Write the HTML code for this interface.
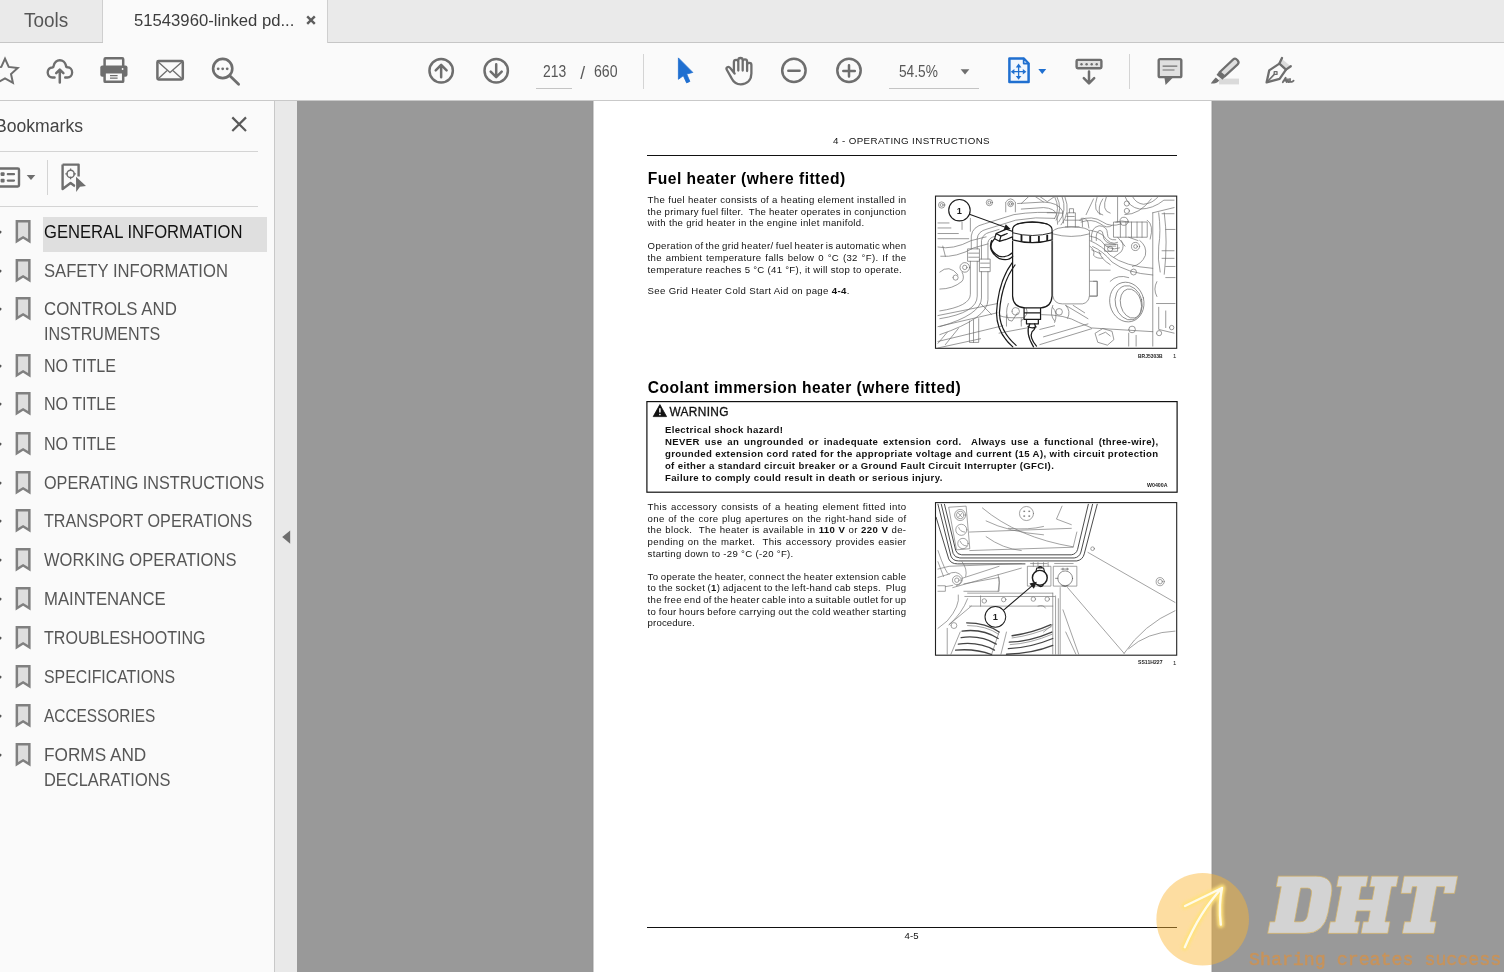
<!DOCTYPE html>
<html><head><meta charset='utf-8'><title>51543960-linked pdf</title>
<style>
html,body{margin:0;padding:0;}
body{width:1504px;height:972px;overflow:hidden;position:relative;background:#999;font-family:"Liberation Sans",sans-serif;}
.t{position:absolute;white-space:pre;transform-origin:0 0;display:block;}
.abs{position:absolute;}
#tabbar{left:0;top:0;width:1504px;height:42px;background:#eaeaea;border-bottom:1px solid #c6c6c6;}
#tabtools{left:0;top:0;width:102px;height:42px;border-right:1px solid #cfcfcf;}
#tabdoc{left:103px;top:0;width:224px;height:43px;background:#fafafa;border-right:1px solid #cfcfcf;}
#toolbar{left:0;top:43px;width:1504px;height:57px;background:#fafafa;border-bottom:1px solid #c9c9c9;}
#sidebar{left:0;top:101px;width:274px;height:871px;background:#fafafa;border-right:1px solid #c8c8c8;}
#splitter{left:275px;top:101px;width:22px;height:871px;background:#e9e9e9;}
#page{left:594px;top:101px;width:617px;height:871px;background:#fff;}
.hr{position:absolute;height:1px;background:#d4d4d4;}
.vsep{position:absolute;width:1px;background:#d4d4d4;}
svg{position:absolute;overflow:visible;}
#txt{position:absolute;left:0;top:0;width:1504px;height:972px;will-change:transform;}

</style></head>
<body>

<div class="abs" id="tabbar"></div>
<div class="abs" id="tabtools"></div>
<div class="abs" id="tabdoc"></div>
<div class="abs" id="toolbar"></div>
<div class="abs" id="sidebar"></div>
<div class="abs" id="splitter"></div>
<div class="abs" id="page"></div>
<div class="abs" style="left:592px;top:101px;width:1px;height:871px;background:#959595"></div><div class="abs" style="left:593px;top:101px;width:1px;height:871px;background:#cdcdcd"></div>
<div class="abs" style="left:1211px;top:101px;width:1px;height:871px;background:#cdcdcd"></div><div class="abs" style="left:1212px;top:101px;width:1px;height:871px;background:#959595"></div>
<!-- toolbar underlines / separators -->
<div class="hr" style="left:536px;top:88px;width:36px;background:#c4c4c4"></div>
<div class="hr" style="left:889px;top:88px;width:90px;background:#c4c4c4"></div>
<div class="vsep" style="left:643px;top:54px;height:35px"></div>
<div class="vsep" style="left:1129px;top:54px;height:35px"></div>
<!-- sidebar rules -->
<div class="hr" style="left:0;top:151px;width:258px"></div>
<div class="hr" style="left:0;top:206px;width:258px"></div>
<div class="vsep" style="left:47px;top:160px;height:35px"></div>
<div class="abs" style="left:43px;top:217px;width:224px;height:35px;background:#dfdfdf"></div>
<div id='txt'>
<span id='t0' class='t' style="left:24.30px;top:7.00px;line-height:26px;font-size:20px;color:#565656;font-family:'Liberation Sans',sans-serif;transform:scaleX(0.9485);">Tools</span>
<span id='t1' class='t' style="left:134.30px;top:10.00px;line-height:21px;font-size:16.5px;color:#3c3c3c;font-family:'Liberation Sans',sans-serif;transform:scaleX(1.0106);">51543960-linked pd...</span>
<span id='t2' class='t' style="left:543.20px;top:62.00px;line-height:20px;font-size:15.6px;color:#565656;font-family:'Liberation Sans',sans-serif;transform:scaleX(0.8912);">213</span>
<span id='t3' class='t' style="left:580.20px;top:62.00px;line-height:23px;font-size:17.5px;color:#5a5a5a;font-family:'Liberation Sans',sans-serif;">/</span>
<span id='t4' class='t' style="left:594.40px;top:62.00px;line-height:20px;font-size:15.6px;color:#565656;font-family:'Liberation Sans',sans-serif;transform:scaleX(0.9066);">660</span>
<span id='t5' class='t' style="left:899.30px;top:62.00px;line-height:20px;font-size:15.6px;color:#565656;font-family:'Liberation Sans',sans-serif;transform:scaleX(0.8775);">54.5%</span>
<span id='t6' class='t' style="left:-5.50px;top:115.00px;line-height:23px;font-size:18px;color:#444;font-family:'Liberation Sans',sans-serif;transform:scaleX(0.9774);">Bookmarks</span>
<span id='t7' class='t' style="left:43.80px;top:221.00px;line-height:23px;font-size:18px;color:#111;font-family:'Liberation Sans',sans-serif;transform:scaleX(0.9232);">GENERAL INFORMATION</span>
<span id='t8' class='t' style="left:43.80px;top:260.00px;line-height:23px;font-size:18px;color:#565656;font-family:'Liberation Sans',sans-serif;transform:scaleX(0.9225);">SAFETY INFORMATION</span>
<span id='t9' class='t' style="left:43.80px;top:298.00px;line-height:23px;font-size:18px;color:#565656;font-family:'Liberation Sans',sans-serif;transform:scaleX(0.9357);">CONTROLS AND</span>
<span id='t10' class='t' style="left:43.80px;top:323.00px;line-height:23px;font-size:18px;color:#565656;font-family:'Liberation Sans',sans-serif;transform:scaleX(0.8938);">INSTRUMENTS</span>
<span id='t11' class='t' style="left:43.80px;top:355.00px;line-height:23px;font-size:18px;color:#565656;font-family:'Liberation Sans',sans-serif;transform:scaleX(0.8923);">NO TITLE</span>
<span id='t12' class='t' style="left:43.80px;top:393.00px;line-height:23px;font-size:18px;color:#565656;font-family:'Liberation Sans',sans-serif;transform:scaleX(0.8923);">NO TITLE</span>
<span id='t13' class='t' style="left:43.80px;top:433.00px;line-height:23px;font-size:18px;color:#565656;font-family:'Liberation Sans',sans-serif;transform:scaleX(0.8923);">NO TITLE</span>
<span id='t14' class='t' style="left:43.80px;top:472.00px;line-height:23px;font-size:18px;color:#565656;font-family:'Liberation Sans',sans-serif;transform:scaleX(0.9007);">OPERATING INSTRUCTIONS</span>
<span id='t15' class='t' style="left:43.80px;top:510.00px;line-height:23px;font-size:18px;color:#565656;font-family:'Liberation Sans',sans-serif;transform:scaleX(0.8977);">TRANSPORT OPERATIONS</span>
<span id='t16' class='t' style="left:43.80px;top:549.00px;line-height:23px;font-size:18px;color:#565656;font-family:'Liberation Sans',sans-serif;transform:scaleX(0.9176);">WORKING OPERATIONS</span>
<span id='t17' class='t' style="left:43.80px;top:588.00px;line-height:23px;font-size:18px;color:#565656;font-family:'Liberation Sans',sans-serif;transform:scaleX(0.9281);">MAINTENANCE</span>
<span id='t18' class='t' style="left:43.80px;top:627.00px;line-height:23px;font-size:18px;color:#565656;font-family:'Liberation Sans',sans-serif;transform:scaleX(0.8921);">TROUBLESHOOTING</span>
<span id='t19' class='t' style="left:43.80px;top:666.00px;line-height:23px;font-size:18px;color:#565656;font-family:'Liberation Sans',sans-serif;transform:scaleX(0.8817);">SPECIFICATIONS</span>
<span id='t20' class='t' style="left:43.80px;top:705.00px;line-height:23px;font-size:18px;color:#565656;font-family:'Liberation Sans',sans-serif;transform:scaleX(0.8558);">ACCESSORIES</span>
<span id='t21' class='t' style="left:43.80px;top:744.00px;line-height:23px;font-size:18px;color:#565656;font-family:'Liberation Sans',sans-serif;transform:scaleX(0.9559);">FORMS AND</span>
<span id='t22' class='t' style="left:43.80px;top:769.00px;line-height:23px;font-size:18px;color:#565656;font-family:'Liberation Sans',sans-serif;transform:scaleX(0.9120);">DECLARATIONS</span>
<span id='t23' class='t' style="left:833.00px;top:134.00px;line-height:13px;font-size:9.75px;color:#111;font-family:'Liberation Sans',sans-serif;letter-spacing:0.399px;">4 - OPERATING INSTRUCTIONS</span>
<span id='t24' class='t' style="left:647.80px;top:169.00px;line-height:20px;font-size:15.6px;color:#000;font-family:'Liberation Sans',sans-serif;font-weight:700;letter-spacing:0.476px;">Fuel heater (where fitted)</span>
<span id='t25' class='t' style="left:647.60px;top:194.00px;line-height:12px;font-size:9.6px;color:#111;font-family:'Liberation Sans',sans-serif;letter-spacing:0.330px;word-spacing:0.021px;">The fuel heater consists of a heating element installed in</span>
<span id='t26' class='t' style="left:647.60px;top:206.00px;line-height:12px;font-size:9.6px;color:#111;font-family:'Liberation Sans',sans-serif;letter-spacing:0.330px;word-spacing:-0.326px;">the primary fuel filter.  The heater operates in conjunction</span>
<span id='t27' class='t' style="left:647.60px;top:217.00px;line-height:12px;font-size:9.6px;color:#111;font-family:'Liberation Sans',sans-serif;letter-spacing:0.315px;">with the grid heater in the engine inlet manifold.</span>
<span id='t28' class='t' style="left:647.60px;top:240.00px;line-height:12px;font-size:9.6px;color:#111;font-family:'Liberation Sans',sans-serif;letter-spacing:0.330px;word-spacing:-0.902px;">Operation of the grid heater/ fuel heater is automatic when</span>
<span id='t29' class='t' style="left:647.60px;top:252.00px;line-height:12px;font-size:9.6px;color:#111;font-family:'Liberation Sans',sans-serif;letter-spacing:0.330px;word-spacing:0.814px;">the ambient temperature falls below 0 °C (32 °F). If the</span>
<span id='t30' class='t' style="left:647.60px;top:264.00px;line-height:12px;font-size:9.6px;color:#111;font-family:'Liberation Sans',sans-serif;letter-spacing:0.293px;">temperature reaches 5 °C (41 °F), it will stop to operate.</span>
<span id='t31' class='t' style="left:647.60px;top:285.00px;line-height:12px;font-size:9.6px;color:#111;font-family:'Liberation Sans',sans-serif;letter-spacing:0.346px;">See Grid Heater Cold Start Aid on page <b>4-4</b>.</span>
<span id='t32' class='t' style="left:647.80px;top:378.00px;line-height:20px;font-size:15.6px;color:#000;font-family:'Liberation Sans',sans-serif;font-weight:700;letter-spacing:0.485px;">Coolant immersion heater (where fitted)</span>
<span id='t33' class='t' style="left:669.50px;top:405.00px;line-height:15px;font-size:11.9px;color:#111;font-family:'Liberation Sans',sans-serif;letter-spacing:0.310px;-webkit-text-stroke:0.3px #111;">WARNING</span>
<span id='t34' class='t' style="left:664.90px;top:424.00px;line-height:12px;font-size:9.6px;color:#111;font-family:'Liberation Sans',sans-serif;font-weight:700;letter-spacing:0.360px;">Electrical shock hazard!</span>
<span id='t35' class='t' style="left:664.90px;top:436.00px;line-height:12px;font-size:9.6px;color:#111;font-family:'Liberation Sans',sans-serif;font-weight:700;letter-spacing:0.380px;word-spacing:1.805px;">NEVER use an ungrounded or inadequate extension cord.  Always use a functional (three-wire),</span>
<span id='t36' class='t' style="left:664.90px;top:448.00px;line-height:12px;font-size:9.6px;color:#111;font-family:'Liberation Sans',sans-serif;font-weight:700;letter-spacing:0.380px;word-spacing:-0.014px;">grounded extension cord rated for the appropriate voltage and current (15 A), with circuit protection</span>
<span id='t37' class='t' style="left:664.90px;top:460.00px;line-height:12px;font-size:9.6px;color:#111;font-family:'Liberation Sans',sans-serif;font-weight:700;letter-spacing:0.359px;">of either a standard circuit breaker or a Ground Fault Circuit Interrupter (GFCI).</span>
<span id='t38' class='t' style="left:664.90px;top:472.00px;line-height:12px;font-size:9.6px;color:#111;font-family:'Liberation Sans',sans-serif;font-weight:700;letter-spacing:0.381px;">Failure to comply could result in death or serious injury.</span>
<span id='t39' class='t' style="left:647.60px;top:501.00px;line-height:12px;font-size:9.6px;color:#111;font-family:'Liberation Sans',sans-serif;letter-spacing:0.330px;word-spacing:0.977px;">This accessory consists of a heating element fitted into</span>
<span id='t40' class='t' style="left:647.60px;top:513.00px;line-height:12px;font-size:9.6px;color:#111;font-family:'Liberation Sans',sans-serif;letter-spacing:0.330px;word-spacing:0.618px;">one of the core plug apertures on the right-hand side of</span>
<span id='t41' class='t' style="left:647.60px;top:524.00px;line-height:12px;font-size:9.6px;color:#111;font-family:'Liberation Sans',sans-serif;letter-spacing:0.330px;word-spacing:0.338px;">the block.  The heater is available in <b>110 V</b> or <b>220 V</b> de-</span>
<span id='t42' class='t' style="left:647.60px;top:536.00px;line-height:12px;font-size:9.6px;color:#111;font-family:'Liberation Sans',sans-serif;letter-spacing:0.330px;word-spacing:0.748px;">pending on the market.  This accessory provides easier</span>
<span id='t43' class='t' style="left:647.60px;top:548.00px;line-height:12px;font-size:9.6px;color:#111;font-family:'Liberation Sans',sans-serif;letter-spacing:0.314px;">starting down to -29 °C (-20 °F).</span>
<span id='t44' class='t' style="left:647.60px;top:571.00px;line-height:12px;font-size:9.6px;color:#111;font-family:'Liberation Sans',sans-serif;letter-spacing:0.330px;word-spacing:-0.603px;">To operate the heater, connect the heater extension cable</span>
<span id='t45' class='t' style="left:647.60px;top:582.00px;line-height:12px;font-size:9.6px;color:#111;font-family:'Liberation Sans',sans-serif;letter-spacing:0.330px;word-spacing:-0.576px;">to the socket (<b>1</b>) adjacent to the left-hand cab steps.  Plug</span>
<span id='t46' class='t' style="left:647.60px;top:594.00px;line-height:12px;font-size:9.6px;color:#111;font-family:'Liberation Sans',sans-serif;letter-spacing:0.330px;word-spacing:-0.851px;">the free end of the heater cable into a suitable outlet for up</span>
<span id='t47' class='t' style="left:647.60px;top:606.00px;line-height:12px;font-size:9.6px;color:#111;font-family:'Liberation Sans',sans-serif;letter-spacing:0.330px;word-spacing:-0.487px;">to four hours before carrying out the cold weather starting</span>
<span id='t48' class='t' style="left:647.60px;top:617.00px;line-height:12px;font-size:9.6px;color:#111;font-family:'Liberation Sans',sans-serif;letter-spacing:0.143px;">procedure.</span>
<span id='t49' class='t' style="left:904.50px;top:930.00px;line-height:12px;font-size:9.6px;color:#111;font-family:'Liberation Sans',sans-serif;letter-spacing:0.075px;">4-5</span>
<span id='t50' class='t' style="left:1138.00px;top:353.00px;line-height:7px;font-size:5.2px;color:#222;font-family:'Liberation Sans',sans-serif;font-weight:700;transform:scaleX(0.9544);">BRJ5303B</span>
<span id='t51' class='t' style="left:1173.00px;top:352.00px;line-height:8px;font-size:6px;color:#222;font-family:'Liberation Sans',sans-serif;">1</span>
<span id='t52' class='t' style="left:1138.00px;top:659.00px;line-height:7px;font-size:5.2px;color:#222;font-family:'Liberation Sans',sans-serif;font-weight:700;transform:scaleX(0.9874);">SS11H227</span>
<span id='t53' class='t' style="left:1173.00px;top:659.00px;line-height:8px;font-size:6px;color:#222;font-family:'Liberation Sans',sans-serif;">1</span>
<span id='t54' class='t' style="left:1147.00px;top:482.00px;line-height:7px;font-size:5.2px;color:#222;font-family:'Liberation Sans',sans-serif;font-weight:700;transform:scaleX(1.0155);">W0400A</span>
<span id='t55' class='t' style="left:1249.40px;top:948.00px;line-height:24px;font-size:18.3px;color:#c8935a;font-family:'Liberation Mono',monospace;transform:scaleX(0.9995);-webkit-text-stroke:0.45px #c8935a;">Sharing creates success</span>
</div>
<svg style="left:0;top:0" width="1504" height="972" viewBox="0 0 1504 972">
<defs>
  <clipPath id="clipSide"><rect x="0" y="101" width="274" height="871"/></clipPath>
  <clipPath id="clipF1"><rect x="936" y="197" width="240" height="151"/></clipPath>
  <clipPath id="clipF2"><rect x="936" y="503" width="240" height="152"/></clipPath>
  <filter id="glow" x="-30%" y="-30%" width="160%" height="160%"><feGaussianBlur stdDeviation="1.6"/></filter>
</defs>

<!-- ================= TAB BAR ================= -->
<g stroke="#5e5e5e" stroke-width="1.8" stroke-linecap="butt" fill="none">
  <path d="M307.2 16.3 L314.8 23.9 M314.8 16.3 L307.2 23.9" stroke-width="2.4"/>
</g>

<!-- ================= TOOLBAR ICONS ================= -->
<g id="tb" fill="none" stroke="#6e6e6e" stroke-width="2.5" stroke-linecap="round" stroke-linejoin="round">
  <!-- star -->
  <path stroke-width="2" stroke-linejoin="miter" d="M5 58.6 L8.7 66.9 L17.7 67.9 L11 74 L12.9 82.8 L5 78.3 L-2.9 82.8 L-1 74 L-7.7 67.9 L1.3 66.9 Z"/>
  <!-- cloud upload -->
  <g transform="translate(59.8 0) scale(0.925 1) translate(-59.8 0)">
  <path d="M54.2 77.4 H51.8 A5 5 0 0 1 51.6 67.4 A2 2 0 0 0 53.3 65.6 A6.7 6.7 0 0 1 66.4 65.4 A2 2 0 0 0 68.2 67.3 A5.05 5.05 0 0 1 68 77.4 H65.6"/>
  </g>
  <path d="M59.8 82.6 V70 M56.2 73.2 L59.8 69.6 L63.4 73.2"/>
  <!-- printer -->
  <rect x="104.6" y="58.2" width="18.6" height="9" rx="1" />
  <rect x="100.3" y="65.4" width="27.2" height="11.4" rx="2" fill="#6e6e6e" stroke="none"/>
  <rect x="104.6" y="72.2" width="18.6" height="9.6" rx="0.6" fill="#fafafa"/>
  <path stroke-width="1.3" stroke-linecap="butt" d="M110 75.7 H117.6 M110 78.2 H117.6"/>
  <circle cx="122.6" cy="69" r="0.9" fill="#fafafa" stroke="none"/>
  <!-- envelope -->
  <rect x="157.4" y="61" width="25.4" height="18.4" rx="1.2"/>
  <path stroke-width="1.3" d="M158 61.8 L170 72.6 L182.2 61.8 M158.2 78.8 L166.6 71 M182 78.8 L173.4 71"/>
  <!-- search -->
  <circle cx="222.7" cy="68.5" r="9.6" stroke-width="2.6"/>
  <path stroke-width="2.8" d="M229.8 75.8 L238.6 84.2"/>
  <g fill="#6e6e6e" stroke="none"><circle cx="218.2" cy="68.8" r="1.4"/><circle cx="222.7" cy="68.8" r="1.4"/><circle cx="227.2" cy="68.8" r="1.4"/></g>
  <!-- page up -->
  <circle cx="441.15" cy="70.75" r="11.7" stroke-width="2.5"/>
  <path d="M441.15 77.2 V65.2 M435.7 70.3 L441.15 64.8 L446.6 70.3"/>
  <!-- page down -->
  <circle cx="496.2" cy="70.75" r="11.7" stroke-width="2.5"/>
  <path d="M496.2 64.3 V76.4 M490.7 71.6 L496.2 77.1 L501.7 71.6"/>
  <!-- hand -->
  <path stroke-width="2.3" d="M733.9 72.5 V62 a2.2 2.2 0 0 1 4.4 0 V70.5 M738.3 62 V60.2 a2.2 2.2 0 0 1 4.4 0 V70.5 M742.7 61.5 a2.2 2.2 0 0 1 4.4 0 V71 M747.1 65 a2.15 2.15 0 0 1 4.3 0 V73.5 c0 7 -4.6 10.8 -10.6 10.8 c-4.6 0 -7.4 -2.4 -9.4 -6.4 l-4.6 -8.2 c-1.2 -2.2 1.6 -4 3.3 -1.8 l4.5 5.6"/>
  <!-- zoom out -->
  <circle cx="793.9" cy="70.4" r="11.7" stroke-width="2.5"/>
  <path d="M788.3 70.8 H799.6"/>
  <!-- zoom in -->
  <circle cx="849" cy="70.4" r="11.7" stroke-width="2.5"/>
  <path d="M843.3 70.9 H854.8 M849 65.3 V76.6"/>
  <!-- zoom dropdown -->
  <path d="M960.6 69.3 H969.4 L965 74.4 Z" fill="#6e6e6e" stroke="none"/>
  <!-- scrolling-mode icon -->
  <rect x="1076.6" y="59.9" width="24.8" height="8.4" rx="1.2" fill="#e2e2e2" stroke-width="2.4"/>
  <g fill="#6e6e6e" stroke="none"><circle cx="1081.5" cy="64.2" r="1.2"/><circle cx="1086.6" cy="64.2" r="1.2"/><circle cx="1091.7" cy="64.2" r="1.2"/><circle cx="1096.7" cy="64.2" r="1.2"/></g>
  <path d="M1089 71.6 V82.6 M1083.8 78.2 L1089 83.4 L1094.2 78.2"/>
  <!-- comment -->
  <rect x="1158.7" y="59.1" width="22.6" height="18" rx="1.4" fill="#e0e0e0" stroke-width="2.4"/>
  <path d="M1164.4 77.6 H1173 L1165.6 85 Z" fill="#6e6e6e" stroke="none"/>
  <path stroke-width="1.2" stroke-linecap="butt" d="M1162.6 66.1 H1177.3 M1162.6 70 H1174.5"/>
  <!-- highlighter -->
  <rect x="1219" y="78.6" width="20" height="5.8" fill="#dadada" stroke="none"/>
  <path d="M1233 59.6 a3 3 0 0 1 4.2 0.3 l0.5 0.6 a3 3 0 0 1 -0.3 4.2 L1224.6 76.4 L1219.6 72.2 Z" fill="#dedede" stroke-width="2.2"/>
  <path d="M1219.4 72.4 L1224.4 76.6 L1222.4 78.8 L1217.4 74.6 Z" fill="#6e6e6e" stroke-width="1.4"/>
  <path d="M1215.8 77.4 L1219.2 80.4 C1217.4 83.2 1213.6 83.8 1210.8 83.5 C1212 81.4 1213.8 79.2 1215.8 77.4 Z" fill="#6e6e6e" stroke="none"/>
  <!-- sign pen -->
  <path d="M1281.4 58.4 L1291 66.4 L1286 70.2 L1279.4 64 Z" fill="#dcdcdc" stroke="none"/>
  <path stroke-width="2.3" d="M1282 58 L1279.4 63.6 L1286 69.6 L1290.8 66.2"/>
  <path stroke-width="2.3" d="M1279.4 63.6 L1269.2 70.4 L1266.6 82.4 L1279.6 78.8 L1286 69.6"/>
  <path stroke-width="1.6" d="M1266.8 82.2 L1275 73.6"/>
  <rect x="1274.2" y="71.6" width="2.8" height="2.8" fill="#fafafa" stroke-width="1.3"/>
  <path stroke-width="1.8" d="M1282.8 82.2 L1285.6 77.8 L1286.6 82 M1283.6 80.6 H1286.2 M1288 79.2 V81.4 c0 1 1.8 1 2 -0.4 V79 M1290.2 81.4 c0.6 1 2.2 0.6 3.4 -0.8"/>
</g>
<!-- cursor (select tool, blue) -->
<path d="M678.4 57.9 L692.8 72.4 L686.7 74.1 L689.9 81.4 L686.6 82.9 L683.3 75.7 L678.4 79.3 Z" fill="#1f6fd0" stroke="#1f6fd0" stroke-width="0.8" stroke-linejoin="round"/>
<!-- fit page (blue) -->
<g fill="none" stroke="#1f6fd0" stroke-linejoin="round">
  <path d="M1009.4 58.5 H1023.6 L1028.6 63.6 V81.9 H1009.4 Z" fill="#f1f6fd" stroke-width="2.5"/>
  <path d="M1023.6 58.5 V63.6 H1028.6 Z" fill="#cfe0f6" stroke-width="1.6"/>
  <path d="M1018.6 66.6 V76.8 M1013.6 71.7 H1023.6" stroke-width="1.3"/>
  <g fill="#1f6fd0" stroke="none">
    <path d="M1018.6 63.6 L1021.4 67.4 H1015.8 Z"/><path d="M1018.6 79.8 L1021.4 76 H1015.8 Z"/>
    <path d="M1010.8 71.7 L1014.4 68.9 V74.5 Z"/><path d="M1026.4 71.7 L1022.8 68.9 V74.5 Z"/>
  </g>
  <path d="M1038.3 69 H1046.2 L1042.25 73.9 Z" fill="#1f6fd0" stroke="none"/>
</g>

<!-- ================= SIDEBAR ================= -->
<g clip-path="url(#clipSide)">
  <!-- close X -->
  <path d="M232.3 117.4 L246 131 M246 117.4 L232.3 131" stroke="#5a5a5a" stroke-width="2.2" fill="none"/>
  <!-- options icon -->
  <g fill="none" stroke="#6e6e6e" stroke-width="2.4">
    <rect x="-8" y="168.5" width="27" height="18" rx="1.2"/>
    <path d="M7.8 174.2 H14 M7.8 180.6 H14" stroke-width="2.2" stroke-linecap="round"/>
  </g>
  <rect x="0.6" y="172.3" width="4" height="3.8" rx="1" fill="#6e6e6e"/><rect x="0.6" y="178.7" width="4" height="3.8" rx="1" fill="#6e6e6e"/>
  <path d="M26.7 175 H35.3 L31 180.1 Z" fill="#6e6e6e"/>
  <!-- find bookmark icon -->
  <path d="M62.6 164.6 H78.6 V176.5 M62.6 164.6 V189 L70.6 183 L75 186.2" fill="none" stroke="#6e6e6e" stroke-width="2.4" stroke-linejoin="round"/>
  <circle cx="70.6" cy="173.9" r="3.6" fill="none" stroke="#6e6e6e" stroke-width="1.5"/>
  <path d="M70.6 168.6 V171 M70.6 176.8 V179.2 M65.3 173.9 H67.7 M73.5 173.9 H75.9" stroke="#6e6e6e" stroke-width="1.3"/>
  <path d="M76 176.8 L86 186.1 L80 186.8 L76.2 192 Z" fill="#6e6e6e" stroke="#fafafa" stroke-width="1.6" paint-order="stroke"/>
  <!-- bookmark row icons -->
  <g stroke="none">
    <path fill="#808080" d="M15.6 220.1 H30.6 V243.4 L23.1 238.8 L15.6 243.4 Z"/><path fill="#dedede" d="M18.1 222.6 H28.1 V238.9 L23.1 235.9 L18.1 238.9 Z"/>
    <path fill="#808080" d="M15.6 259.1 H30.6 V282.4 L23.1 277.8 L15.6 282.4 Z"/><path fill="#dedede" d="M18.1 261.6 H28.1 V277.9 L23.1 274.9 L18.1 277.9 Z"/>
    <path fill="#808080" d="M15.6 297.1 H30.6 V320.4 L23.1 315.8 L15.6 320.4 Z"/><path fill="#dedede" d="M18.1 299.6 H28.1 V315.9 L23.1 312.9 L18.1 315.9 Z"/>
    <path fill="#808080" d="M15.6 354.1 H30.6 V377.4 L23.1 372.8 L15.6 377.4 Z"/><path fill="#dedede" d="M18.1 356.6 H28.1 V372.9 L23.1 369.9 L18.1 372.9 Z"/>
    <path fill="#808080" d="M15.6 392.1 H30.6 V415.4 L23.1 410.8 L15.6 415.4 Z"/><path fill="#dedede" d="M18.1 394.6 H28.1 V410.9 L23.1 407.9 L18.1 410.9 Z"/>
    <path fill="#808080" d="M15.6 432.1 H30.6 V455.4 L23.1 450.8 L15.6 455.4 Z"/><path fill="#dedede" d="M18.1 434.6 H28.1 V450.9 L23.1 447.9 L18.1 450.9 Z"/>
    <path fill="#808080" d="M15.6 471.1 H30.6 V494.4 L23.1 489.8 L15.6 494.4 Z"/><path fill="#dedede" d="M18.1 473.6 H28.1 V489.9 L23.1 486.9 L18.1 489.9 Z"/>
    <path fill="#808080" d="M15.6 509.1 H30.6 V532.4 L23.1 527.8 L15.6 532.4 Z"/><path fill="#dedede" d="M18.1 511.6 H28.1 V527.9 L23.1 524.9 L18.1 527.9 Z"/>
    <path fill="#808080" d="M15.6 548.1 H30.6 V571.4 L23.1 566.8 L15.6 571.4 Z"/><path fill="#dedede" d="M18.1 550.6 H28.1 V566.9 L23.1 563.9 L18.1 566.9 Z"/>
    <path fill="#808080" d="M15.6 587.1 H30.6 V610.4 L23.1 605.8 L15.6 610.4 Z"/><path fill="#dedede" d="M18.1 589.6 H28.1 V605.9 L23.1 602.9 L18.1 605.9 Z"/>
    <path fill="#808080" d="M15.6 626.1 H30.6 V649.4 L23.1 644.8 L15.6 649.4 Z"/><path fill="#dedede" d="M18.1 628.6 H28.1 V644.9 L23.1 641.9 L18.1 644.9 Z"/>
    <path fill="#808080" d="M15.6 665.1 H30.6 V688.4 L23.1 683.8 L15.6 688.4 Z"/><path fill="#dedede" d="M18.1 667.6 H28.1 V683.9 L23.1 680.9 L18.1 683.9 Z"/>
    <path fill="#808080" d="M15.6 704.1 H30.6 V727.4 L23.1 722.8 L15.6 727.4 Z"/><path fill="#dedede" d="M18.1 706.6 H28.1 V722.9 L23.1 719.9 L18.1 722.9 Z"/>
    <path fill="#808080" d="M15.6 743.1 H30.6 V766.4 L23.1 761.8 L15.6 766.4 Z"/><path fill="#dedede" d="M18.1 745.6 H28.1 V761.9 L23.1 758.9 L18.1 761.9 Z"/>
  </g>
  <g fill="#555"><rect x="-1" y="230.8" width="2.4" height="2.6" rx="0.8"/><rect x="-1" y="269.8" width="2.4" height="2.6" rx="0.8"/><rect x="-1" y="307.8" width="2.4" height="2.6" rx="0.8"/><rect x="-1" y="364.8" width="2.4" height="2.6" rx="0.8"/><rect x="-1" y="402.8" width="2.4" height="2.6" rx="0.8"/><rect x="-1" y="442.8" width="2.4" height="2.6" rx="0.8"/><rect x="-1" y="481.8" width="2.4" height="2.6" rx="0.8"/><rect x="-1" y="519.8" width="2.4" height="2.6" rx="0.8"/><rect x="-1" y="558.8" width="2.4" height="2.6" rx="0.8"/><rect x="-1" y="597.8" width="2.4" height="2.6" rx="0.8"/><rect x="-1" y="636.8" width="2.4" height="2.6" rx="0.8"/><rect x="-1" y="675.8" width="2.4" height="2.6" rx="0.8"/><rect x="-1" y="714.8" width="2.4" height="2.6" rx="0.8"/><rect x="-1" y="753.8" width="2.4" height="2.6" rx="0.8"/></g>
</g>
<!-- splitter collapse arrow -->
<path d="M290.2 530.4 V543.8 L282.2 537.1 Z" fill="#6e6e6e"/>

<!-- ================= DOCUMENT ================= -->
<g stroke="#111" fill="none">
  <path d="M647 155.5 H1177" stroke-width="1.1"/>
  <path d="M647 927.5 H1177" stroke-width="1.1"/>
  <rect x="646.9" y="401.6" width="530.2" height="90.6" stroke-width="1.2"/>
  <rect x="935.5" y="196.1" width="241.2" height="152.2" stroke-width="1.1" stroke="#222"/>
  <rect x="935.5" y="502.6" width="241.2" height="152.6" stroke-width="1.1" stroke="#222"/>
</g>
<!-- warning triangle -->
<path d="M659.9 404.6 L666.6 416.6 H653.2 Z" fill="#111" stroke="#111" stroke-width="0.8" stroke-linejoin="round"/>
<path d="M659.9 408.3 V412.6" stroke="#fff" stroke-width="1.5"/><circle cx="659.9" cy="414.5" r="0.85" fill="#fff"/>


<g clip-path="url(#clipF1)"><g transform="translate(925,185) scale(0.185185)" fill="none" stroke-linecap="round" stroke-linejoin="round">
 <g stroke="#6c6c6c" stroke-width="3.7">
  <circle cx="90" cy="108" r="17"/><circle cx="90" cy="108" r="8"/><circle cx="348" cy="95" r="17"/><circle cx="348" cy="95" r="8"/><circle cx="462" cy="102" r="15"/><circle cx="462" cy="102" r="7"/>
  <path d="M436 145 V92 Q462 58 488 92 V145 M70 205 H130 M70 232 H140 M70 262 H180 M70 290 H236 M245 180 V250 M200 200 V240"/>
  <path d="M70 335 Q150 352 250 300 L330 280 M85 385 Q170 392 262 340 L340 318 M96 330 L110 385"/>
  <path d="M250 345 V275 Q255 225 320 210 L480 160 Q600 140 745 152 M282 345 V290 Q285 250 335 238 L490 190 Q600 170 700 180 M305 400 V300 Q310 265 350 255 L400 240 M340 400 V310 Q345 285 375 278"/>
  <path d="M500 100 L640 92 Q720 95 742 140 L748 205 M520 130 L640 122 Q700 125 712 160 L716 212 M560 62 L520 100 M620 62 L660 90 L700 62 M595 62 L640 92"/>
  <path d="M232 345 H294 V412 H232 Z M236 368 H290 M236 390 H290 M296 400 H352 V468 H296 Z M300 422 H348 M300 446 H348"/>
  <circle cx="215" cy="445" r="26"/><circle cx="215" cy="445" r="12"/>
  <path d="M80 470 Q130 425 178 485 M151 500 a14 14 0 1 0 28 0 a14 14 0 1 0 -28 0 M80 562 Q150 562 200 520 Q215 500 200 470"/>
  <path d="M245 412 V590 Q245 655 80 680 M282 412 V600 Q282 690 80 722 M305 468 V610 Q305 700 80 765 M340 468 V620 Q340 720 80 808"/>
  <path d="M70 705 L392 640 M70 765 L390 690 M70 845 L420 760 M70 880 L300 830 M240 735 V850 H290 V722 M262 728 V850 M120 795 L70 855 M180 775 L110 862 M360 700 L300 640"/>

  <path d="M700 62 Q732 130 700 182 M740 62 Q770 140 722 200 M660 150 L700 150"/>
  <path d="M822 250 Q900 230 960 270 Q1000 330 1040 310 M822 282 Q900 262 950 300 Q990 360 1050 340 M835 190 Q900 160 960 200 Q1000 230 1060 210"/>
  <path d="M930 62 Q900 150 960 162 M980 62 Q950 140 1000 152 M1040 62 V200 M1080 62 Q1100 120 1160 130 Q1230 130 1290 82 L1345 82 M1120 62 Q1140 100 1180 104 Q1230 100 1260 62"/>
  <circle cx="1090" cy="100" r="14"/><circle cx="1090" cy="140" r="14"/><circle cx="1075" cy="196" r="22"/><circle cx="1000" cy="345" r="14"/>
  <path d="M1020 200 H1200 V282 H1020 Z M1055 200 V282 M1085 200 V282 M1115 200 V282 M1145 200 V282 M1172 200 V282 M1200 190 Q1238 215 1216 292 M1030 200 Q1060 188 1100 200 M1040 282 L1080 330 M1100 282 L1150 300"/>
  <circle cx="1137" cy="332" r="22"/><circle cx="1137" cy="332" r="10"/><path d="M972 320 H1040 V358 H972 Z M982 330 H1030 M1060 300 Q1080 330 1060 360 L1020 390"/>
  <path d="M712 62 Q745 130 708 190 M755 62 Q790 150 735 215 M757 190 H850 V226 M766 170 H806 M843 180 Q870 175 880 200 L885 232 M843 200 Q900 180 945 208 Q985 240 1010 218"/>
  <path d="M900 300 Q890 230 940 220 Q985 222 985 262 Q985 300 1030 296 M925 300 Q920 250 945 245 Q962 248 962 270 Q962 318 1030 322 M910 75 L870 160 M960 75 Q930 120 945 160"/>
  <path d="M1079 160 Q1160 160 1222 75 M1280 155 H1345 M1280 355 H1345 M1280 396 H1345 M1262 150 Q1275 250 1262 330 Q1255 400 1270 470 M890 330 Q920 350 910 380 Q930 400 960 395 M900 350 L950 372 M1160 300 Q1200 330 1190 380 Q1170 430 1120 440"/>
  <path d="M890 300 Q960 330 1000 380 Q1080 440 1230 450 M905 332 Q960 356 1010 416 Q1090 476 1230 486 M940 360 Q950 400 1000 430"/>
  <path d="M1230 150 V870 M1292 150 Q1312 300 1292 482 M1230 150 L1345 122 M1300 240 H1350 M1300 440 H1350 M1300 500 H1350 M1252 522 Q1230 562 1252 602 M1250 640 H1350 M1262 660 V780 L1345 800 M1300 680 V770"/>
  <ellipse cx="1090" cy="632" rx="92" ry="108" transform="rotate(-14 1090 632)"/><ellipse cx="1100" cy="636" rx="72" ry="94" transform="rotate(-14 1100 636)"/><ellipse cx="1112" cy="640" rx="56" ry="80" transform="rotate(-14 1112 640)"/>
  <path d="M890 460 H1000 M890 520 H930 V600 H890 M1110 470 a16 16 0 1 0 32 0 a16 16 0 1 0 -32 0 M1000 520 Q1040 480 1100 500"/>
  <path d="M400 705 Q440 722 530 716 M630 700 Q760 700 830 742 L900 772 L1230 792 M620 862 L900 776 M640 820 L880 750 M690 662 Q720 692 700 742"/>
  <path d="M450 640 Q430 690 452 730 L470 735 L500 690 M520 640 Q560 660 548 700 L520 735 M470 682 a20 20 0 1 0 40 0 a20 20 0 1 0 -40 0"/>
  <path d="M690 650 Q670 700 700 735 M760 650 Q790 680 770 720 M706 685 a18 18 0 1 0 36 0 a18 18 0 1 0 -36 0 M760 650 L880 722 M800 650 L862 690"/>
  <path d="M920 800 L960 775 L1010 790 L1020 835 L985 865 L935 850 Z M940 810 L975 795 L1000 815 M1100 780 a18 18 0 1 0 36 0 a18 18 0 1 0 -36 0 M1100 870 V800 M1140 870 V812 M1250 800 a14 14 0 1 0 28 0 a14 14 0 1 0 -28 0 M1320 770 a12 12 0 1 0 24 0 a12 12 0 1 0 -24 0"/>
  <path d="M440 762 V702 M520 762 V722 M400 800 L560 770 M620 780 L700 760"/>
  <path fill="#fff" d="M690 250 Q700 228 790 226 Q880 228 888 250 V598 Q884 636 850 642 H742 Q698 642 690 600 Z"/>
  <path d="M690 264 Q790 292 888 264 M770 226 V150 H812 V226 M758 226 H832 M780 150 V128 H802 V150 M910 520 H930 V600 H890"/>
 </g>
 <g stroke="#1a1a1a" stroke-width="6.6">
  <path d="M473 305 V600 Q476 660 540 664 H625 Q682 660 686 600 V305" fill="#fff"/>
  <path d="M473 240 Q473 202 579 199 Q685 202 686 240 V296 Q579 326 473 296 Z" fill="#fff"/>
  <path d="M473 258 Q579 288 686 258 M500 210 Q579 192 658 210" stroke-width="5"/>
  <path d="M521 270 V305 M568 276 V311 M615 276 V310 M660 268 V302" stroke-width="10" stroke-linecap="butt"/>
  <path d="M535 666 V726 H624 V666 M548 726 V750 H612 V726 M535 690 H624" />
  <path d="M566 750 Q540 800 586 874 M592 750 Q604 772 578 792 Q562 822 602 870 M556 764 Q578 778 600 766"/>
  <path d="M470 250 L440 238 L384 262 L376 290 L402 304 L438 294 L472 280 M384 262 L410 276 L402 304 M410 276 L444 262" fill="#fff"/>
  <path d="M376 290 Q328 342 398 384 Q440 396 472 366 M360 300 Q336 356 402 398 Q450 414 474 384"/>
  <path d="M470 420 Q396 520 386 690 Q388 800 474 874 M486 432 Q412 530 402 690 Q404 790 492 866"/>
 </g>
 <circle cx="186" cy="136" r="58" fill="#fff" stroke="#1a1a1a" stroke-width="6"/>
 <path d="M240 158 L440 230" stroke="#1a1a1a" stroke-width="5.5"/>
 <path d="M462 238 L424 244 L436 212 Z" fill="#1a1a1a"/>
 <text x="186" y="154" font-family="'Liberation Sans',sans-serif" font-weight="700" font-size="50" text-anchor="middle" fill="#1a1a1a">1</text>
</g></g>

<g clip-path="url(#clipF2)"><g transform="translate(925,495) scale(0.185185)" fill="none" stroke-linecap="round" stroke-linejoin="round">
 <g stroke="#747474" stroke-width="3.6">
  <path stroke="#3c3c3c" stroke-width="5" d="M70 50 L140 330 Q150 356 182 356 L820 356 Q852 350 860 318 L930 50 M88 50 L152 316 Q160 338 188 340 L806 340 Q834 336 842 308 L905 50 M105 50 L166 300 Q174 322 198 323 L790 323 Q816 320 824 294 L882 50 M60 120 L128 345 Q140 372 176 372 L540 372"/>
  <path d="M130 66 L222 60 L242 290 L172 296 Z M240 200 L790 180 M242 300 L800 282 L820 200"/>
  <circle cx="190" cy="108" r="30"/><circle cx="196" cy="188" r="30"/><circle cx="205" cy="262" r="28"/><circle cx="190" cy="108" r="20"/><path d="M180 98 L200 120 M200 98 L180 120 M182 176 Q190 200 215 200 M190 250 Q200 275 225 275"/>
  <circle cx="548" cy="100" r="38"/><circle cx="535" cy="88" r="3"/><circle cx="562" cy="88" r="3"/><circle cx="535" cy="114" r="3"/><circle cx="562" cy="114" r="3"/>
  <path d="M310 70 Q500 230 800 280 M330 140 Q450 200 640 215 M330 225 Q420 290 520 300 M740 60 L710 130 L790 160 M450 180 Q560 190 640 170"/>
  <path d="M880 310 L1350 580 M1350 625 Q1180 700 1075 855 M770 500 L1075 855 M1350 735 Q1200 740 1100 830 M730 500 V860 M745 620 L830 860 M760 740 L815 860"/>
  <circle cx="1270" cy="468" r="22"/><circle cx="1270" cy="468" r="12"/><circle cx="905" cy="290" r="10"/>
  <path d="M555 385 H680 V492 H555 Z M695 385 H820 V492 H695 Z M570 370 H660 M700 370 H800 M585 385 V365 M610 385 V365 M640 385 V365 M665 385 V365"/>
  <circle cx="757" cy="450" r="40" stroke="#555"/><path d="M735 400 H775 M745 395 V405 M768 395 V405 M705 450 H718 M740 490 Q757 500 772 490" stroke="#555"/>
  <path d="M70 400 L130 385 L520 370 M70 445 L120 430 M120 430 Q170 400 200 440 Q210 480 170 490 M200 450 L400 385 M150 500 L520 395 M210 480 L400 445 V520 H210 M395 430 Q410 470 395 520"/>
  <circle cx="172" cy="460" r="24"/><circle cx="172" cy="460" r="12"/><path d="M70 490 H110 V520 H70 M110 495 L150 488"/>
  <path d="M70 300 Q110 420 130 430 M70 360 L100 440 M200 360 Q230 400 220 440 M180 540 Q190 600 120 680 L70 720 M230 560 Q200 640 130 700"/>
  <path d="M230 530 H690 M215 548 H700 M240 600 H690 M300 545 V600 M690 530 V860 M705 545 V860 M720 560 V860"/>
  <circle cx="320" cy="572" r="12"/><circle cx="425" cy="565" r="12"/><circle cx="585" cy="562" r="12"/><circle cx="660" cy="562" r="12"/><path d="M610 600 Q640 590 650 610"/>
  <path d="M130 700 L250 600 M120 720 V860 M140 705 a16 16 0 1 0 32 0 a16 16 0 1 0 -32 0 M190 740 L140 860 M400 740 L360 860 M440 740 L410 860 M690 700 L640 740"/>
  <path d="M225 690 Q330 690 400 740 M200 735 Q310 720 395 775 M195 770 Q300 755 385 805 M180 805 Q290 790 375 838 M165 838 Q270 828 360 862 M470 760 Q580 745 680 700 M455 795 Q570 790 685 740 M450 830 Q570 825 690 775 M440 860 Q580 856 690 812" stroke-width="7" stroke="#444"/>
  <path d="M230 705 Q330 705 398 752 M470 772 Q580 758 682 712 M460 808 Q570 802 686 752"/>
 </g>
 <g stroke="#1e1e1e" stroke-width="6">
  <circle cx="620" cy="447" r="40" fill="#fff" stroke-width="8"/>
  <path d="M598 416 L604 394 H640 L646 416 M610 394 Q622 380 634 394 M606 484 Q625 505 640 484"/>
 </g>
 <circle cx="380" cy="658" r="56" fill="#fff" stroke="#1e1e1e" stroke-width="5.5"/>
 <path d="M424 622 L586 484" stroke="#1e1e1e" stroke-width="5.5"/>
 <path d="M604 468 L588 506 L564 478 Z" fill="#1e1e1e"/>
 <text x="380" y="676" font-family="'Liberation Sans',sans-serif" font-weight="700" font-size="50" text-anchor="middle" fill="#1e1e1e">1</text>
</g></g>

<!-- ================= WATERMARK ================= -->
<circle cx="1202.7" cy="919.2" r="46.3" fill="#fab432" fill-opacity="0.46"/>
<g fill="none" stroke-linecap="round" stroke-linejoin="round">
  <path d="M1184.8 947.2 C1193 928 1206 905 1222 888 M1185 906 L1222 888 M1222 888 C1219.6 899 1219.4 912 1220.8 924.6" stroke="#ffe27a" stroke-width="6.5" filter="url(#glow)" opacity="1"/>
  <path d="M1184.8 947.2 C1193 928 1206 905 1222 888 M1185 906 L1222 888 M1222 888 C1219.6 899 1219.4 912 1220.8 924.6" stroke="#fffbe8" stroke-width="2.4"/>
</g>

<g transform="translate(1240,860) scale(0.175531) matrix(1 0 -0.184 1 76.9 0)" fill="#d3d3d3" stroke="#d9b566" stroke-width="4" stroke-linejoin="miter">
 <path fill-rule="evenodd" d="M158 92 H372 Q480 92 480 200 V300 Q480 418 372 418 H158 V352 H186 V152 H158 Z M298 160 V352 H330 Q366 352 366 316 V196 Q366 160 336 160 Z"/>
 <path d="M502 92 H670 V152 H642 V225 H718 V152 H690 V92 H842 V152 H814 V352 H842 V418 H690 V352 H718 V290 H642 V352 H670 V418 H502 V352 H530 V152 H502 Z"/>
 <path d="M875 92 H1180 V190 H1118 V152 H1071 V352 H1105 V418 H925 V352 H959 V152 H933 V190 H875 Z"/>
</g>
</svg>

</body></html>
